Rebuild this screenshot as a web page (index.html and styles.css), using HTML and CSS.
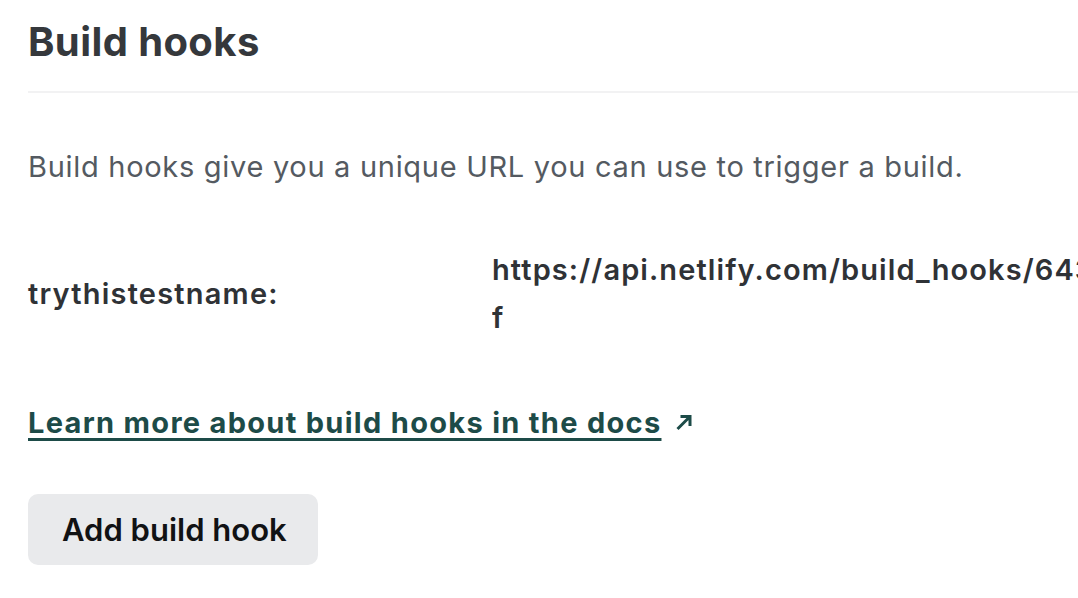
FILE: index.html
```html
<!DOCTYPE html>
<html lang="en">
<head>
<meta charset="utf-8">
<title>Build hooks</title>
<link rel="stylesheet" href="styles.css">
</head>
<body>
<div class="page">
  <header class="section-head">
    <h1 class="title">Build hooks</h1>
  </header>
  <p class="intro">Build hooks give you a unique URL you can use to trigger a build.</p>
  <div class="hook-row">
    <span class="hook-name">trythistestname:</span>
    <span class="hook-url">https://api.netlify.com/build_hooks/643e1b2c9a8d7f00a1b2c3d4e5<br>f</span>
  </div>
  <a class="docs-link" href="#"><span class="docs-text">Learn more about build hooks in the docs</span><svg class="ext-icon" width="18" height="18" viewBox="0 0 18 18" aria-hidden="true"><path d="M2.5 16 L15 3.5 M5.5 3.5 H15 V13" fill="none" stroke="currentColor" stroke-width="3" stroke-linecap="butt" stroke-linejoin="miter"/></svg></a>
  <div class="actions">
    <button class="btn" type="button">Add build hook</button>
  </div>
</div>
</body>
</html>
```

FILE: styles.css
```css
html, body {
  margin: 0;
  padding: 0;
  background: #ffffff;
  overflow: hidden;
}

body {
  font-family: Inter, "Noto Sans", "Liberation Sans", sans-serif;
  color: #35383c;
}

.page {
  padding-left: 28px;
  width: 1050px;
}

.section-head {
  padding-top: 18px;
  padding-bottom: 25px;
  border-bottom: 2px solid #f2f2f3;
}

.title {
  margin: 0;
  font-size: 40px;
  line-height: 48px;
  font-weight: 700;
  color: #35383c;
  letter-spacing: 0.4px;
}

.intro {
  margin: 53px 0 0;
  font-size: 29px;
  line-height: 42px;
  font-weight: 400;
  color: #545a61;
  letter-spacing: 0.7px;
}

.hook-row {
  margin-top: 58px;
  display: grid;
  grid-template-columns: 464px minmax(0, 1fr);
  align-items: center;
}

.hook-name {
  font-size: 29px;
  line-height: 42px;
  font-weight: 600;
  color: #2f3236;
  letter-spacing: 1.2px;
}

.hook-url {
  font-size: 29px;
  line-height: 48px;
  font-weight: 600;
  color: #2f3236;
  white-space: nowrap;
  letter-spacing: 1.1px;
  overflow: hidden;
}

.docs-link {
  margin-top: 60px;
  display: flex;
  align-items: center;
  gap: 14px;
  width: max-content;
  font-size: 29px;
  line-height: 42px;
  font-weight: 700;
  color: #1d4b48;
  text-decoration: none;
  letter-spacing: 1.3px;
}

.docs-text {
  text-decoration: underline;
  text-decoration-thickness: 3px;
  text-underline-offset: 5px;
}

.ext-icon {
  display: block;
  margin-top: -2px;
}

.actions {
  margin-top: 50px;
}

.btn {
  height: 71px;
  padding: 0 31px 0 34px;
  border: none;
  border-radius: 10px;
  background: #e9eaec;
  font-family: Inter, "Noto Sans", "Liberation Sans", sans-serif;
  font-size: 31px;
  font-weight: 600;
  color: #111214;
  cursor: pointer;
}
```
